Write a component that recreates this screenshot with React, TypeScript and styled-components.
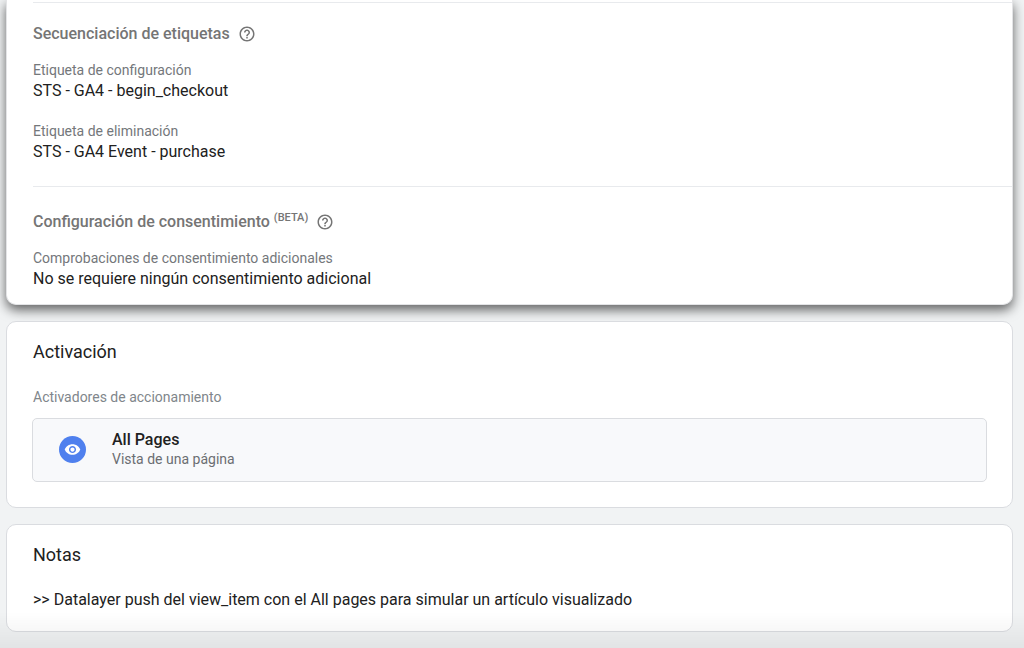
import React from 'react';
import styled, { createGlobalStyle } from 'styled-components';

const GlobalStyle = createGlobalStyle`
  *, *::before, *::after { box-sizing: border-box; }
  body {
    margin: 0;
    background: #f1f3f4;
    color: #212121;
    font-family: Roboto, Arial, sans-serif;
    font-size: 16px;
    line-height: 20px;
  }
`;

const Page = styled.main`
  display: flex;
  flex-direction: column;
  gap: 16px;
  padding: 0 11px 16px 6px;
`;

const Card = styled.section`
  background: #fff;
  border: 1px solid #dadce0;
  border-radius: 10px;
  padding: 18px 25px 25px 26px;
`;

const TagCard = styled(Card)`
  border-width: 0 1px 1px;
  border-color: #e3e4e6;
  border-radius: 0 0 10px 10px;
  padding: 2px 0 15px 26px;
  box-shadow: 0 5px 12px rgba(0, 0, 0, 0.6);
`;

const NotesCard = styled(Card)`
  padding-bottom: 21px;
`;

const Group = styled.div`
  border-top: 1px solid #e8eaed;
  padding: 21px 0 24px;

  &:last-child {
    padding: 25px 0 0;
  }
`;

const GroupTitle = styled.h3`
  display: flex;
  align-items: center;
  gap: 8px;
  margin: 0 0 16px;
  color: #757575;
  font-size: 16px;
  font-weight: 500;
  line-height: 20px;
`;

const Beta = styled.sup`
  font-size: 11px;
  line-height: 0;
`;

const HelpButton = styled.button`
  display: flex;
  padding: 0;
  border: 0;
  background: none;
  color: #757575;
`;

const Fields = styled.dl`
  display: flex;
  flex-direction: column;
  gap: 20px;
  margin: 0;
`;

const Label = styled.dt`
  color: #74777b;
  font-size: 14px;
  line-height: 20px;
`;

const Value = styled.dd`
  margin: 0;
  line-height: 21px;
`;

const CardTitle = styled.h2`
  margin: 0 0 23px;
  font-size: 18px;
  font-weight: 400;
  line-height: 24px;
`;

const Caption = styled.p`
  margin: 0 0 11px;
  color: #80868b;
  font-size: 14px;
  line-height: 20px;
`;

const Trigger = styled.div`
  display: flex;
  align-items: center;
  gap: 26px;
  min-height: 64px;
  margin-left: -1px;
  padding: 8px 26px 10px;
  background: #f8f9fb;
  border: 1px solid #dadce0;
  border-radius: 5px;
`;

const TriggerIcon = styled.span`
  display: flex;
  align-items: center;
  justify-content: center;
  width: 27px;
  height: 27px;
  border-radius: 50%;
  background: #4f80ee;
`;

const TriggerName = styled.div`
  font-weight: 500;
  line-height: 20px;
`;

const TriggerType = styled.div`
  color: #6b6e72;
  font-size: 14px;
  line-height: 18px;
`;

const Note = styled.p`
  margin: 0;
  line-height: 20px;
`;

const BottomFade = styled.div`
  position: fixed;
  right: 0;
  bottom: 0;
  left: 0;
  height: 36px;
  background: linear-gradient(rgba(0, 0, 0, 0), rgba(0, 0, 0, 0.06));
  pointer-events: none;
`;

const Help = ({ label }: { label: string }) => (
  <HelpButton type="button" aria-label={label}>
    <svg width="18" height="18" viewBox="0 0 24 24" fill="currentColor" aria-hidden="true">
      <path d="M11 18h2v-2h-2v2zm1-16C6.48 2 2 6.48 2 12s4.48 10 10 10 10-4.48 10-10S17.52 2 12 2zm0 18c-4.41 0-8-3.59-8-8s3.59-8 8-8 8 3.59 8 8-3.59 8-8 8zm0-14c-2.21 0-4 1.79-4 4h2c0-1.1.9-2 2-2s2 .9 2 2c0 2-3 1.75-3 5h2c0-2.25 3-2.5 3-5 0-2.21-1.79-4-4-4z" />
    </svg>
  </HelpButton>
);

const Field = ({ label, value }: { label: string; value: string }) => (
  <div>
    <Label>{label}</Label>
    <Value>{value}</Value>
  </div>
);

export default function App() {
  return (
    <>
      <GlobalStyle />
      <Page>
        <TagCard>
          <Group>
            <GroupTitle>
              <span>Secuenciación de etiquetas</span>
              <Help label="Ayuda" />
            </GroupTitle>
            <Fields>
              <Field label="Etiqueta de configuración" value="STS - GA4 - begin_checkout" />
              <Field label="Etiqueta de eliminación" value="STS - GA4 Event - purchase" />
            </Fields>
          </Group>
          <Group>
            <GroupTitle>
              <span>
                Configuración de consentimiento <Beta>(BETA)</Beta>
              </span>
              <Help label="Ayuda" />
            </GroupTitle>
            <Fields>
              <Field
                label="Comprobaciones de consentimiento adicionales"
                value="No se requiere ningún consentimiento adicional"
              />
            </Fields>
          </Group>
        </TagCard>
        <Card>
          <CardTitle>Activación</CardTitle>
          <Caption>Activadores de accionamiento</Caption>
          <Trigger>
            <TriggerIcon>
              <svg width="17" height="17" viewBox="0 0 24 24" fill="#fff" aria-hidden="true">
                <path d="M12 4.5C7 4.5 2.73 7.61 1 12c1.73 4.39 6 7.5 11 7.5s9.27-3.11 11-7.5c-1.73-4.39-6-7.5-11-7.5zM12 17c-2.76 0-5-2.24-5-5s2.24-5 5-5 5 2.24 5 5-2.24 5-5 5zm0-8c-1.66 0-3 1.34-3 3s1.34 3 3 3 3-1.34 3-3-1.34-3-3-3z" />
              </svg>
            </TriggerIcon>
            <div>
              <TriggerName>All Pages</TriggerName>
              <TriggerType>Vista de una página</TriggerType>
            </div>
          </Trigger>
        </Card>
        <NotesCard>
          <CardTitle>Notas</CardTitle>
          <Note>&gt;&gt; Datalayer push del view_item con el All pages para simular un artículo visualizado</Note>
        </NotesCard>
      </Page>
      <BottomFade />
    </>
  );
}
